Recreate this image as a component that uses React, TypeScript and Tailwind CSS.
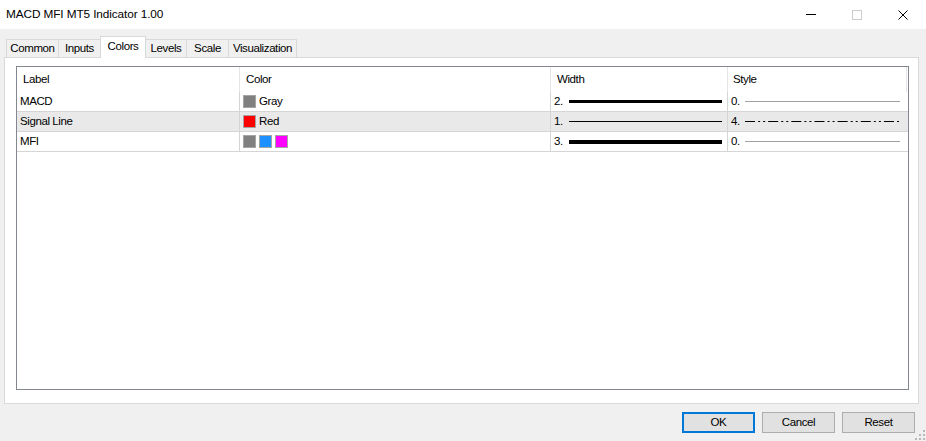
import React from 'react'

const tabs = [
  { name: 'Common', w: 'w-[52px]', extra: '' },
  { name: 'Inputs', w: 'w-[42px]', extra: '' },
  { name: 'Colors', w: 'w-[46px]', extra: 'selected' },
  { name: 'Levels', w: 'w-[40px]', extra: 'noleft' },
  { name: 'Scale', w: 'w-[42px]', extra: '' },
  { name: 'Visualization', w: 'w-[69px]', extra: 'last' },
]

function Swatch({ color }: { color: string }) {
  return <span className="w-[13px] h-[13px] border border-[#a5a5a5] shrink-0" style={{ background: color }} />
}

function WidthLine({ h }: { h: string }) {
  return <span className={`flex-1 bg-black ${h}`} />
}

function StyleLine({ dash }: { dash?: boolean }) {
  return (
    <svg className="flex-1 h-[3px]" preserveAspectRatio="none" viewBox="0 0 154 3">
      {dash ? (
        <line x1="0" y1="1.5" x2="154" y2="1.5" stroke="#000" strokeWidth="1" strokeDasharray="10 3 2 3 2 3" />
      ) : (
        <line x1="0" y1="1.5" x2="154" y2="1.5" stroke="#a0a0a0" strokeWidth="1" />
      )}
    </svg>
  )
}

const rows = [
  { label: 'MACD', colors: ['#808080'], name: 'Gray', w: '2.', wh: 'h-[3px]', s: '0.', dash: false, bg: 'bg-white' },
  { label: 'Signal Line', colors: ['#ff0000'], name: 'Red', w: '1.', wh: 'h-[1px]', s: '4.', dash: true, bg: 'bg-[#e9e9e9]' },
  { label: 'MFI', colors: ['#808080', '#1e90ff', '#ff00ff'], name: '', w: '3.', wh: 'h-[4px]', s: '0.', dash: false, bg: 'bg-white' },
]

export default function App() {
  return (
    <div className="w-[926px] h-[441px] bg-[#f0f0f0] flex flex-col relative overflow-hidden text-black font-['Liberation_Sans',Arial,sans-serif] text-[11.5px] tracking-[-0.4px]">
      {/* title bar */}
      <div className="h-[29px] bg-white flex items-center shrink-0">
        <span className="pl-[6px] text-[11.8px] tracking-[-0.1px]">MACD MFI MT5 Indicator 1.00</span>
        <div className="ml-auto flex h-full">
          <div className="w-[46px] h-full flex items-center justify-center">
            <span className="w-[10px] h-px bg-black" />
          </div>
          <div className="w-[46px] h-full flex items-center justify-center">
            <span className="w-[10px] h-[10px] border border-[#cccccc]" />
          </div>
          <div className="w-[46px] h-full flex items-center justify-center">
            <svg width="10" height="10" viewBox="0 0 10 10">
              <path d="M0.5 0.5 L9.5 9.5 M9.5 0.5 L0.5 9.5" stroke="#000" strokeWidth="1" />
            </svg>
          </div>
        </div>
      </div>

      {/* tabs */}
      <div className="flex items-end pl-[6px] pt-[7px] h-[28px] shrink-0">
        {tabs.map((t) => {
          const sel = t.extra === 'selected'
          return (
            <div
              key={t.name}
              className={`${t.w} flex items-center justify-center border-t border-[#d9d9d9] ${
                t.extra === 'noleft' ? '' : 'border-l'
              } ${sel ? 'h-[22px] -mb-px bg-white border-r relative z-10 pb-[2px]' : 'h-[18px]'} ${t.extra === 'last' ? 'border-r' : ''}`}
            >
              {t.name}
            </div>
          )
        })}
      </div>

      {/* panel */}
      <div className="ml-[4px] w-[915px] h-[347px] border border-[#d9d9d9] bg-white pl-[11px] pt-[8px] shrink-0">
        <div className="w-[893px] h-[324px] border border-[#828790] bg-white">
          <div className="grid grid-cols-[223px_311px_177px_180px] h-[25px]">
            <div className="flex items-center pl-[6px] border-r border-[#e5e5e5]">Label</div>
            <div className="flex items-center pl-[6px] border-r border-[#e5e5e5]">Color</div>
            <div className="flex items-center pl-[6px] border-r border-[#e5e5e5]">Width</div>
            <div className="flex items-center pl-[5px] border-r border-[#e5e5e5] mr-px">Style</div>
          </div>
          {rows.map((r) => (
            <div key={r.label} className={`grid grid-cols-[223px_311px_177px_180px] h-[20px] border-b border-[#d5d5d5] ${r.bg}`}>
              <div className="flex items-center pl-[3px] border-r border-[#d5d5d5]">{r.label}</div>
              <div className="flex items-center pl-[3px] gap-[3px] border-r border-[#d5d5d5]">
                {r.colors.map((c, i) => (
                  <Swatch key={i} color={c} />
                ))}
                {r.name && <span>{r.name}</span>}
              </div>
              <div className="flex items-center pl-[3px] pr-[5px] border-r border-[#d5d5d5]">
                <span className="w-[15px] shrink-0">{r.w}</span>
                <WidthLine h={r.wh} />
              </div>
              <div className="flex items-center pl-[3px] pr-[8px]">
                <span className="w-[14px] shrink-0">{r.s}</span>
                <StyleLine dash={r.dash} />
              </div>
            </div>
          ))}
        </div>
      </div>

      {/* buttons */}
      <div className="flex justify-end gap-[7px] pr-[11px] mt-[8px]">
        <button className="w-[73px] h-[21px] bg-[#e1e1e1] border-2 border-[#0078d7] flex items-center justify-center">OK</button>
        <button className="w-[73px] h-[21px] bg-[#e1e1e1] border border-[#adadad] flex items-center justify-center">Cancel</button>
        <button className="w-[73px] h-[21px] bg-[#e1e1e1] border border-[#adadad] flex items-center justify-center">Reset</button>
      </div>

      {/* size grip */}
      <svg className="absolute right-[1px] bottom-[1px]" width="10" height="10" viewBox="0 0 10 10">
        <g fill="#b8b8b8">
          <rect x="8" y="0" width="2" height="2" />
          <rect x="4" y="4" width="2" height="2" />
          <rect x="8" y="4" width="2" height="2" />
          <rect x="0" y="8" width="2" height="2" />
          <rect x="4" y="8" width="2" height="2" />
          <rect x="8" y="8" width="2" height="2" />
        </g>
      </svg>
    </div>
  )
}
